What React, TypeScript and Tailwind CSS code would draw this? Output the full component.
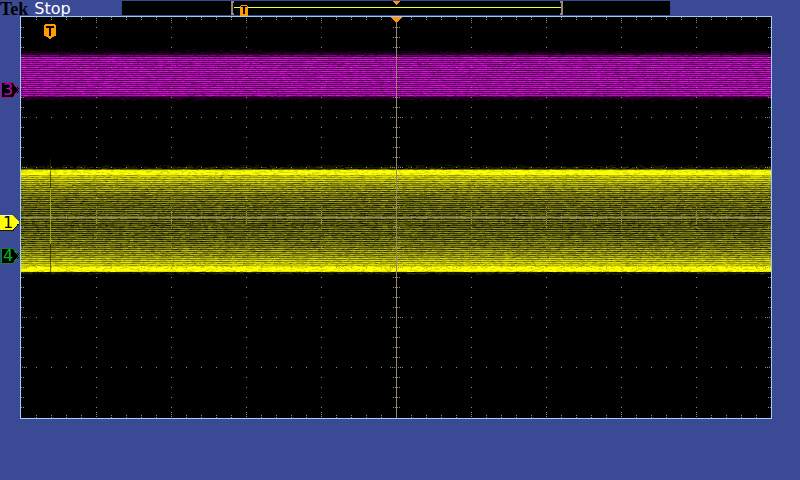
import React, { useMemo } from 'react';

type Channel = {
  id: string;
  y: number;
  fill: string;
  stroke: string;
  text: string;
};

// Graticule, in the units of the trace viewBox
const LEFT = 21;
const RIGHT = 770;
const TOP = 17;
const BOTTOM = 417;
const CX = 396;
const CY = 217;

const CHANNELS: Channel[] = [
  { id: '3', y: 90, fill: '#000000', stroke: '#9c108c', text: 'text-[#b510b5]' },
  { id: '4', y: 256, fill: '#000000', stroke: '#088c21', text: 'text-[#00b521]' },
  { id: '1', y: 223, fill: '#ffff00', stroke: '#f7f7a5', text: 'text-black' },
];

const dot = (x: number, y: number) => `M${x} ${y}h1v1h-1z`;

function buildGraticule() {
  let d = '';
  for (let y = TOP + 10; y < BOTTOM; y += 10) {
    const major = (y - TOP) % 50 === 0;
    if (y === CY) continue;
    if (major) {
      for (let x = LEFT + 15; x < RIGHT; x += 15) d += dot(x, y);
      [1, 3, 5].forEach((o) => (d += dot(LEFT + o, y) + dot(RIGHT - o, y)));
      [2, 4, 6].forEach((o) => (d += dot(CX - o, y) + dot(CX + o, y)));
    } else {
      [0, 2].forEach((o) => (d += dot(LEFT + o, y) + dot(RIGHT - o, y)));
      [-3, -1, 1, 3].forEach((o) => (d += dot(CX + o, y)));
    }
    for (let x = LEFT + 75; x < RIGHT; x += 75) d += dot(x, y);
  }
  for (let x = LEFT + 15; x < RIGHT; x += 15) {
    if ((x - LEFT) % 75 === 0) {
      [1, 3, 5].forEach((o) => (d += dot(x, TOP + o) + dot(x, BOTTOM - o)));
      [-6, -4, -2, 2, 4, 6].forEach((o) => (d += dot(x, CY + o)));
    } else {
      [0, 2].forEach((o) => (d += dot(x, TOP + o) + dot(x, BOTTOM - o)));
      [-3, -1, 1, 3].forEach((o) => (d += dot(x, CY + o)));
    }
  }
  return d;
}

// Small deterministic generator, so the noise is the same on each render
function makeRandom(seed: number) {
  let s = seed;
  return () => {
    s = (s * 1664525 + 1013904223) % 4294967296;
    return s / 4294967296;
  };
}

// Every scan line gets a shade, with short runs of the neighbouring shades on it
function buildBand(
  from: number,
  to: number,
  level: (y: number) => number,
  colors: string[],
  seed: number,
  jitter: number,
) {
  const rand = makeRandom(seed);
  const paths = colors.map(() => '');
  for (let y = from; y <= to; y++) {
    const center = level(y);
    let x = LEFT;
    while (x <= RIGHT) {
      const run = Math.min(1 + Math.floor(rand() * 4), RIGHT + 1 - x);
      const value = Math.round(center + (rand() - 0.5) * jitter);
      const i = Math.max(0, Math.min(colors.length - 1, value));
      if (i > 0) paths[i] += `M${x} ${y}h${run}v1h${-run}z`;
      x += run;
    }
  }
  return paths;
}

const MAGENTA = ['#000000', '#180018', '#310031', '#520052', '#7b007b', '#9c009c', '#bd08bd', '#de10de'];
const YELLOW = ['#000000', '#181800', '#313108', '#525208', '#73730c', '#949408', '#bdbd00', '#dede00', '#ffff00'];

function magentaLevel(y: number) {
  if (y < 51) return 0;
  if (y < 53) return 0.8;
  if (y < 55) return 1.6;
  if (y === 55) return 3.8;
  if (y === 56) return 2;
  if (y > 99) return 0.1;
  if (y > 97) return 1;
  if (y > 95) return y === 96 ? 3 : 1.6;
  const strong = (y - 57) % 2 === 0;
  const beat = Math.cos(((y - 59) / 5) * Math.PI);
  return strong ? 6.3 + beat * 0.3 : 3.1 - beat * 0.2;
}

function yellowLevel(y: number) {
  if (y < 167) return 0.3;
  if (y < 169) return 1;
  if (y === 169) return 4;
  if (y === 170) return 7.4;
  if (y <= 174) return 7.9;
  if (y > 273) return 0.2;
  if (y > 271) return 1;
  if (y >= 267) return y === 271 ? 7 : 7.9;
  const edge = Math.abs(y - 220) / 47;
  const strong = y % 2 === 0;
  const beat = Math.cos((y / 5) * Math.PI) * 0.3;
  return strong ? 4 + edge * edge * 3.3 + beat : 1.9 + edge * edge * edge * 4.2 - beat * 0.5;
}

const Traces: React.FC = () => {
  const graticule = useMemo(buildGraticule, []);
  const magenta = useMemo(() => buildBand(49, 101, magentaLevel, MAGENTA, 7, 1.3), []);
  const yellow = useMemo(() => buildBand(165, 274, yellowLevel, YELLOW, 21, 1.5), []);

  return (
    <svg viewBox="20 16 752 403" shapeRendering="crispEdges" className="block w-full" aria-label="Waveform display">
      <rect x="20" y="16" width="752" height="403" fill="#9cceff" />
      <rect x="21" y="17" width="750" height="401" fill="#000000" />

      {magenta.map((d, i) => <path key={MAGENTA[i]} d={d} fill={MAGENTA[i]} />)}
      {yellow.map((d, i) => <path key={YELLOW[i]} d={d} fill={YELLOW[i]} />)}

      {/* Trigger instant */}
      <path d="M50 159h1v10h-1z" fill="#212100" />
      <path d="M50 170h1v18h-1zM50 244h1v28h-1z" fill="#000000" fillOpacity="0.5" />
      <path d="M50 188h1v56h-1z" fill="#a5a500" />

      {/* Graticule */}
      <path d={graticule} fill="#948c73" />
      <path d="M396 17h1v401h-1z" fill="#948473" />
      <path d="M21 217h750v1H21z" fill="#948484" />

      {/* Trigger flag */}
      <path d="M45 24h10v1h1v11h-2v1h-2v1h-1v1h-2v-1h-1v-1h-2v-1h-2V25h1z" fill="#ff9c00" />
      <path d="M46 26h8v2h-3v8h-2v-8h-3z" fill="#000000" />
      <path d="M391 17h11v1h-1v1h-1v1h-1v1h-1v1h-1v1h-1v-1h-1v-1h-1v-1h-1v-1h-1v-1h-1z" fill="#ff9410" />
    </svg>
  );
};

const RecordBar: React.FC = () => (
  <svg
    viewBox="122 0 548 16"
    shapeRendering="crispEdges"
    className="block w-full"
    aria-label="Record position"
  >
    <rect x="122" y="1" width="548" height="14" fill="#000400" />
    <rect x="234" y="7" width="327" height="1" fill="#ffff21" />
    <path d="M231 1h3v2h-1v10h1v2h-3zM563 1h-3v2h1v10h-1v2h3z" fill="#948484" />
    <path d="M241 5h6v1h1v10h-8V6h1z" fill="#ff9c00" />
    <path d="M241 6h6v1h-6zM243 7h2v7h-2z" fill="#000000" />
    <path d="M393 1h7v1h-1v1h-1v1h-1v1h-1v-1h-1v-1h-1v-1h-1z" fill="#ff9410" />
  </svg>
);

const ChannelMarker: React.FC<{ channel: Channel }> = ({ channel }) => (
  <div
    className="absolute right-full flex h-4 w-5 -translate-y-1/2 items-center"
    style={{ top: `${((channel.y - 16) / 403) * 100}%` }}
  >
    <svg viewBox="0 0 20 16" shapeRendering="crispEdges" className="absolute inset-0 h-full w-full">
      <path d="M1 0h12l6 7v2l-6 7H1z" fill={channel.fill} />
      {channel.id === '1' ? (
        <>
          <path d="M0 0h2v16H0z" fill={channel.fill} />
          <path d="M0 0.5h12" fill="none" stroke={channel.stroke} />
          <path d="M0 15.5h13l5.5-6.5" fill="none" stroke="#181800" />
        </>
      ) : (
        <path d="M1.5 0.5h11l6 7v1l-6 7h-11z" fill="none" stroke={channel.stroke} />
      )}
    </svg>
    <span className={`relative w-4 text-center font-['DejaVu_Sans',sans-serif] text-base leading-4 ${channel.text}`}>
      {channel.id}
    </span>
  </div>
);

const App: React.FC = () => {
  return (
    <main className="min-h-screen bg-[#3a4a94]">
      <header className="flex h-4 items-start">
        <div className="flex w-[122px] shrink-0 items-start gap-1.5 whitespace-nowrap leading-[18px]">
          <span className="font-['Liberation_Serif',serif] text-[18px] font-bold text-black">Tek</span>
          <span className="font-['DejaVu_Sans',sans-serif] text-[16px] text-white">Stop</span>
        </div>
        <div className="mr-[130px] flex-1">
          <RecordBar />
        </div>
      </header>

      <section className="relative mr-7 ml-5">
        <Traces />
        {CHANNELS.map((channel) => (
          <ChannelMarker key={channel.id} channel={channel} />
        ))}
      </section>
    </main>
  );
};

export default App;
